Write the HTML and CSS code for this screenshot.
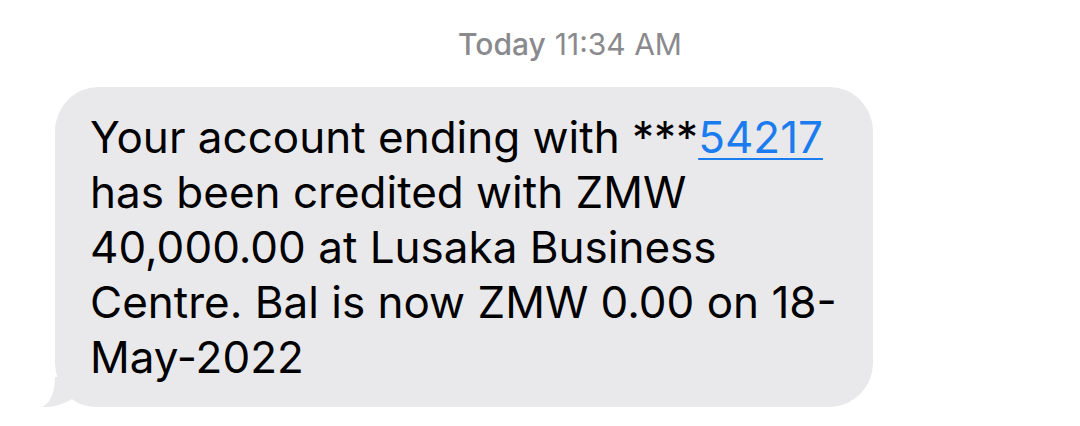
FILE: index.html
```html
<!DOCTYPE html>
<html>
<head>
<meta charset="utf-8">
<link rel="stylesheet" href="styles.css">
</head>
<body>
<div class="thread">
  <div class="stamp"><span class="day">Today</span> 11:34 AM</div>
  <div class="row">
    <div class="bubble">
      <p class="msg">Your account ending with ***<a class="link" href="#">54217</a><br>has been credited with ZMW<br>40,000.00 at Lusaka Business<br>Centre. Bal is now ZMW 0.00 on 18-<br>May-2022</p>
      <svg class="tail" width="60" height="30" viewBox="0 0 60 30"><path d="M13 0 C13 16 8 26 0 30 C10 31 22 27 30 22 C36 27 44 30 58 30 L58 0 Z" fill="#e9e9eb"/></svg>
    </div>
  </div>
</div>
</body>
</html>
```
FILE: styles.css
```css
html, body {
  margin: 0;
  padding: 0;
  background: #ffffff;
}
body {
  width: 1080px;
  height: 426px;
  overflow: hidden;
  font-family: Inter, "Liberation Sans", sans-serif;
}
.thread {
  display: flex;
  flex-direction: column;
}
.stamp {
  height: 87px;
  display: flex;
  align-items: center;
  justify-content: center;
  gap: 9px;
  padding-left: 60px;
  box-sizing: border-box;
  font-size: 30px;
  color: #8a8a8e;
  font-weight: 400;
}
.stamp .day {
  font-weight: 500;
}
.row {
  display: flex;
  padding-left: 55px;
}
.bubble {
  position: relative;
  width: 818px;
  box-sizing: border-box;
  background: #e9e9eb;
  border-radius: 44px;
  padding: 23px 20px 22px 35px;
}
.msg {
  margin: 0;
  font-size: 44px;
  line-height: 55px;
  color: #000000;
  position: relative;
  z-index: 1;
}
.link {
  color: #1b7cf0;
  text-decoration: underline;
  text-decoration-thickness: 2px;
  text-underline-offset: 5px;
}
.tail {
  position: absolute;
  left: -13px;
  bottom: 0;
}
```
